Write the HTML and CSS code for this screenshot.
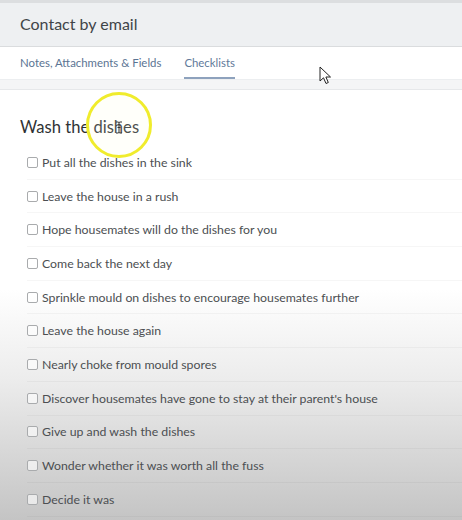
FILE: index.html
```html
<!DOCTYPE html>
<html>
<head>
<meta charset="utf-8">
<link rel="stylesheet" href="styles.css">
</head>
<body>
<div class="page">
  <header class="header">
    <h1 class="title">Contact by email</h1>
  </header>
  <nav class="tabs">
    <span class="tab">Notes, Attachments &amp; Fields</span>
    <span class="tab active">Checklists</span>
  </nav>
  <div class="band"></div>
  <main class="content">
    <h2 class="list-title">Wash the dishes</h2>
    <ul class="checklist">
      <li class="item"><span class="box"></span>Put all the dishes in the sink</li>
      <li class="item"><span class="box"></span>Leave the house in a rush</li>
      <li class="item"><span class="box"></span>Hope housemates will do the dishes for you</li>
      <li class="item"><span class="box"></span>Come back the next day</li>
      <li class="item"><span class="box"></span>Sprinkle mould on dishes to encourage housemates further</li>
      <li class="item"><span class="box"></span>Leave the house again</li>
      <li class="item"><span class="box"></span>Nearly choke from mould spores</li>
      <li class="item"><span class="box"></span>Discover housemates have gone to stay at their parent's house</li>
      <li class="item"><span class="box"></span>Give up and wash the dishes</li>
      <li class="item"><span class="box"></span>Wonder whether it was worth all the fuss</li>
      <li class="item"><span class="box"></span>Decide it was</li>
    </ul>
  </main>
  <div class="highlight">
    <svg class="ibeam" width="8" height="13" viewBox="0 0 8 13">
      <path d="M1 1 H3 Q4 1 4 2 Q4 1 5 1 H7 M4 2 V11 Q4 12 3 12 H1 M4 11 Q4 12 5 12 H7 M2.5 6.5 H5.5" fill="none" stroke="#333" stroke-width="1"/>
    </svg>
  </div>
  <svg class="pointer" width="14" height="20" viewBox="0 0 14 20">
    <path d="M1 1 L1 15 L4.5 11.8 L7 17.5 L9.3 16.5 L6.9 11 L11.5 11 Z" fill="#fff" stroke="#222" stroke-width="1" stroke-linejoin="round"/>
  </svg>
</div>
</body>
</html>
```
FILE: styles.css
```css
* { box-sizing: border-box; }
html, body { margin: 0; padding: 0; }
body {
  width: 462px;
  height: 520px;
  overflow: hidden;
  font-family: "Lato", "Open Sans", sans-serif;
  background: #fff;
}
.page {
  position: relative;
  width: 462px;
  height: 520px;
  display: flex;
  flex-direction: column;
}
.header {
  height: 47px;
  background: #eef0f2;
  border-top: 3px solid #dcdee0;
  border-bottom: 1px solid #dadcde;
  display: flex;
  align-items: center;
  padding-left: 20px;
  padding-bottom: 3px;
}
.title {
  margin: 0;
  font-size: 16px;
  font-weight: 400;
  color: #404448;
}
.tabs {
  height: 32px;
  background: #fff;
  display: flex;
  align-items: stretch;
  padding-left: 20px;
  gap: 23px;
}
.tab {
  display: flex;
  align-items: center;
  font-size: 11.4px;
  color: #5b7493;
  padding-top: 1px;
  border-bottom: 2px solid transparent;
}
.tab.active {
  color: #5f7a9a;
  border-bottom-color: #8ea2bd;
}
.band {
  height: 11px;
  background: #f4f5f6;
  border-top: 1px solid #eceef0;
  border-bottom: 1px solid #e6e8ea;
}
.content {
  flex: 1;
  padding: 26px 0 0 20px;
  background:
    linear-gradient(to bottom, #ffffff 0px, #ffffff 200px, #ececec 290px, #d8d8d8 360px, #c4c4c4 431px);
}
.list-title {
  margin: 0 0 8px 0;
  font-size: 16.6px;
  font-weight: 400;
  color: #2f3235;
  height: 22px;
  line-height: 22px;
}
.checklist {
  list-style: none;
  margin: 0;
  padding: 0 0 0 7px;
}
.item {
  height: 33.7px;
  display: flex;
  align-items: center;
  font-size: 12.3px;
  color: #4c4f52;
  border-bottom: 1px solid rgba(0,0,0,0.035);
}
.box {
  width: 11px;
  height: 11px;
  border: 1px solid #a9abad;
  border-radius: 2px;
  background: rgba(255,255,255,0.6);
  margin-right: 4px;
  flex: none;
}
.highlight {
  position: absolute;
  left: 86px;
  top: 92px;
  width: 66px;
  height: 66px;
  border-radius: 50%;
  border: 3px solid #f0ec2c;
  background: rgba(255, 255, 220, 0.15);
  display: flex;
  align-items: center;
  justify-content: center;
}
.ibeam {
  margin-top: 5px;
}
.pointer {
  position: absolute;
  left: 319px;
  top: 66px;
}
```
